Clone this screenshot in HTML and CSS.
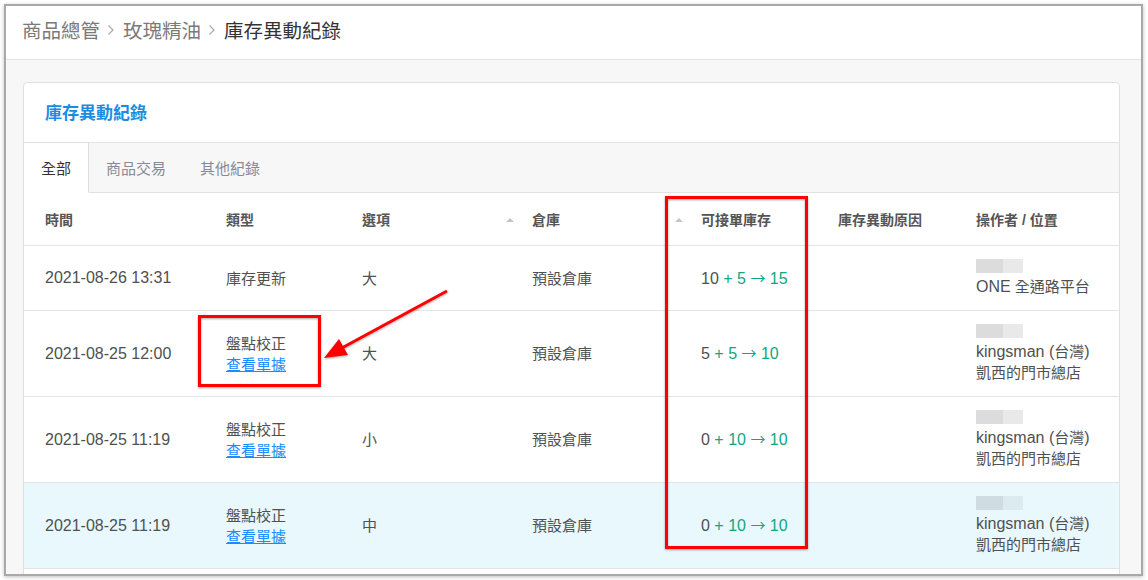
FILE: index.html
```html
<html>

<head>
    <title>庫存異動紀錄</title>
    <link rel="stylesheet" href="styles.css">
</head>

<body>
    <div class="window">
        <div class="topbar">
            <span class="crumb">商品總管</span>
            <svg class="chev" width="8" height="12" viewBox="0 0 8 12"><path d="M1.5 1.5 L6 6 L1.5 10.5" /></svg>
            <span class="crumb">玫瑰精油</span>
            <svg class="chev" width="8" height="12" viewBox="0 0 8 12"><path d="M1.5 1.5 L6 6 L1.5 10.5" /></svg>
            <span class="crumb current">庫存異動紀錄</span>
        </div>

        <div class="content">
            <div class="card">
                <div class="card-head">庫存異動紀錄</div>

                <div class="tabs">
                    <div class="tab active">全部</div>
                    <div class="tab">商品交易</div>
                    <div class="tab">其他紀錄</div>
                    <div class="tab-rest"></div>
                </div>

                <div class="table">
                    <div class="row head">
                        <div class="cell">時間</div>
                        <div class="cell">類型</div>
                        <div class="cell">選項</div>
                        <div class="cell"><span class="sort"></span>倉庫</div>
                        <div class="cell"><span class="sort"></span>可接單庫存</div>
                        <div class="cell">庫存異動原因</div>
                        <div class="cell">操作者 / 位置</div>
                    </div>

                    <div class="row">
                        <div class="cell"><span class="lat">2021-08-26 13:31</span></div>
                        <div class="cell">庫存更新</div>
                        <div class="cell">大</div>
                        <div class="cell">預設倉庫</div>
                        <div class="cell"><span class="lat">10 <span class="delta">+ 5 <span class="arrow">→</span> 15</span></span></div>
                        <div class="cell"></div>
                        <div class="cell">
                            <div class="blur"><span></span><span></span></div>
                            <div><span class="lat">ONE</span> 全通路平台</div>
                        </div>
                    </div>

                    <div class="row">
                        <div class="cell"><span class="lat">2021-08-25 12:00</span></div>
                        <div class="cell">
                            <div>盤點校正</div>
                            <a href="#" class="link">查看單據</a>
                        </div>
                        <div class="cell">大</div>
                        <div class="cell">預設倉庫</div>
                        <div class="cell"><span class="lat">5 <span class="delta">+ 5 <span class="arrow">→</span> 10</span></span></div>
                        <div class="cell"></div>
                        <div class="cell">
                            <div class="blur"><span></span><span></span></div>
                            <div><span class="lat">kingsman (</span>台灣<span class="lat">)</span></div>
                            <div>凱西的門市總店</div>
                        </div>
                    </div>

                    <div class="row">
                        <div class="cell"><span class="lat">2021-08-25 11:19</span></div>
                        <div class="cell">
                            <div>盤點校正</div>
                            <a href="#" class="link">查看單據</a>
                        </div>
                        <div class="cell">小</div>
                        <div class="cell">預設倉庫</div>
                        <div class="cell"><span class="lat">0 <span class="delta">+ 10 <span class="arrow">→</span> 10</span></span></div>
                        <div class="cell"></div>
                        <div class="cell">
                            <div class="blur"><span></span><span></span></div>
                            <div><span class="lat">kingsman (</span>台灣<span class="lat">)</span></div>
                            <div>凱西的門市總店</div>
                        </div>
                    </div>

                    <div class="row hover">
                        <div class="cell"><span class="lat">2021-08-25 11:19</span></div>
                        <div class="cell">
                            <div>盤點校正</div>
                            <a href="#" class="link">查看單據</a>
                        </div>
                        <div class="cell">中</div>
                        <div class="cell">預設倉庫</div>
                        <div class="cell"><span class="lat">0 <span class="delta">+ 10 <span class="arrow">→</span> 10</span></span></div>
                        <div class="cell"></div>
                        <div class="cell">
                            <div class="blur"><span></span><span></span></div>
                            <div><span class="lat">kingsman (</span>台灣<span class="lat">)</span></div>
                            <div>凱西的門市總店</div>
                        </div>
                    </div>
                </div>
            </div>
        </div>
    </div>

    <!-- red annotation marks drawn over the screenshot -->
    <svg class="marks" width="1148" height="580" viewBox="0 0 1148 580">
        <defs>
            <filter id="shade" x="-10%" y="-10%" width="120%" height="120%">
                <feDropShadow dx="0" dy="1" stdDeviation="1.2" flood-color="#000" flood-opacity="0.35" />
            </filter>
        </defs>
        <g filter="url(#shade)">
            <rect x="666.5" y="197.5" width="140" height="350" fill="none" stroke="#ff0000" stroke-width="3" />
            <rect x="199.5" y="316.5" width="120" height="69" fill="none" stroke="#ff0000" stroke-width="3" />
            <line x1="447" y1="291" x2="340" y2="349" stroke="#ff0000" stroke-width="3" />
            <polygon points="324,358 339,339 348,355" fill="#ff0000" />
        </g>
    </svg>
</body>

</html>
```

FILE: styles.css
```css
body {
    margin: 0;
    background-color: #ffffff;
    font-family: "Liberation Sans", "Noto Sans CJK TC", sans-serif;
    color: #505050;
    position: relative;
    width: 1148px;
    height: 580px;
    overflow: hidden;
}

.window {
    box-sizing: border-box;
    margin: 4px 0 0 4px;
    width: 1139px;
    height: 572px;
    border: 2px solid #a9a9a9;
    box-shadow: 0 1px 4px rgba(0, 0, 0, 0.25);
    overflow: hidden;
    background-color: #f7f7f7;
}

.topbar {
    display: flex;
    align-items: center;
    box-sizing: border-box;
    height: 54px;
    padding: 0 0 7px 16px;
    background-color: #ffffff;
    border-bottom: 1px solid #e4e4e4;
}

.crumb {
    font-size: 19.5px;
    color: #7a7a7a;
}

.crumb.current {
    color: #333333;
}

.chev {
    margin: 1px 8px 0 7px;
}

.chev path {
    fill: none;
    stroke: #aaaaaa;
    stroke-width: 1.2;
}

.content {
    padding: 22px 21px 0 17px;
}

.card {
    background-color: #ffffff;
    border: 1px solid #e0e0e0;
    border-radius: 4px;
    padding-bottom: 40px;
}

.card-head {
    height: 59px;
    line-height: 61px;
    padding-left: 21px;
    font-size: 17px;
    font-weight: bold;
    color: #1a8de3;
}

.tabs {
    display: flex;
    background-color: #f7f7f8;
    border-top: 1px solid #e2e2e2;
}

.tab {
    height: 49px;
    line-height: 51px;
    padding: 0 17px;
    font-size: 15px;
    color: #868a96;
    border-bottom: 1px solid #e2e2e2;
}

.tab.active {
    background-color: #ffffff;
    color: #333333;
    border-right: 1px solid #dedede;
    border-bottom-color: #ffffff;
}

.tab-rest {
    flex: 1;
    border-bottom: 1px solid #e2e2e2;
}

.row {
    display: grid;
    grid-template-columns: 181px 136px 170px 169px 137px 138px 1fr;
    align-items: center;
    border-bottom: 1px solid #e4e4e4;
    font-size: 15px;
    line-height: 21px;
    padding: 13px 0 13px 0;
}

.row.head {
    height: 53px;
    box-sizing: border-box;
    padding: 3px 0 0 0;
    font-size: 14px;
    font-weight: bold;
    color: #555555;
}

.row.hover {
    background-color: #e8f8fd;
}

.cell {
    padding-left: 21px;
    position: relative;
}

.lat {
    font-size: 16px;
    line-height: 1;
}

.sort {
    position: absolute;
    left: -5px;
    top: 8px;
    width: 0;
    height: 0;
    border-left: 4px solid transparent;
    border-right: 4px solid transparent;
    border-bottom: 4px solid #c2c5cf;
}

.delta {
    color: #11a683;
}

.arrow {
    font-family: "Noto Sans CJK TC", sans-serif;
    font-size: 15px;
    line-height: 1;
}

.link {
    color: #1a8cff;
    text-decoration: underline;
}

.blur {
    display: flex;
    height: 14px;
    margin-bottom: 3px;
}

.blur span:first-child {
    width: 27px;
    background-color: #dcdcdc;
}

.blur span:last-child {
    width: 20px;
    background-color: #e9e9e9;
}

.row.hover .blur span:first-child {
    background-color: #cfdde2;
}

.row.hover .blur span:last-child {
    background-color: #dcebef;
}

.marks {
    position: absolute;
    left: 0;
    top: 0;
    pointer-events: none;
}
```
